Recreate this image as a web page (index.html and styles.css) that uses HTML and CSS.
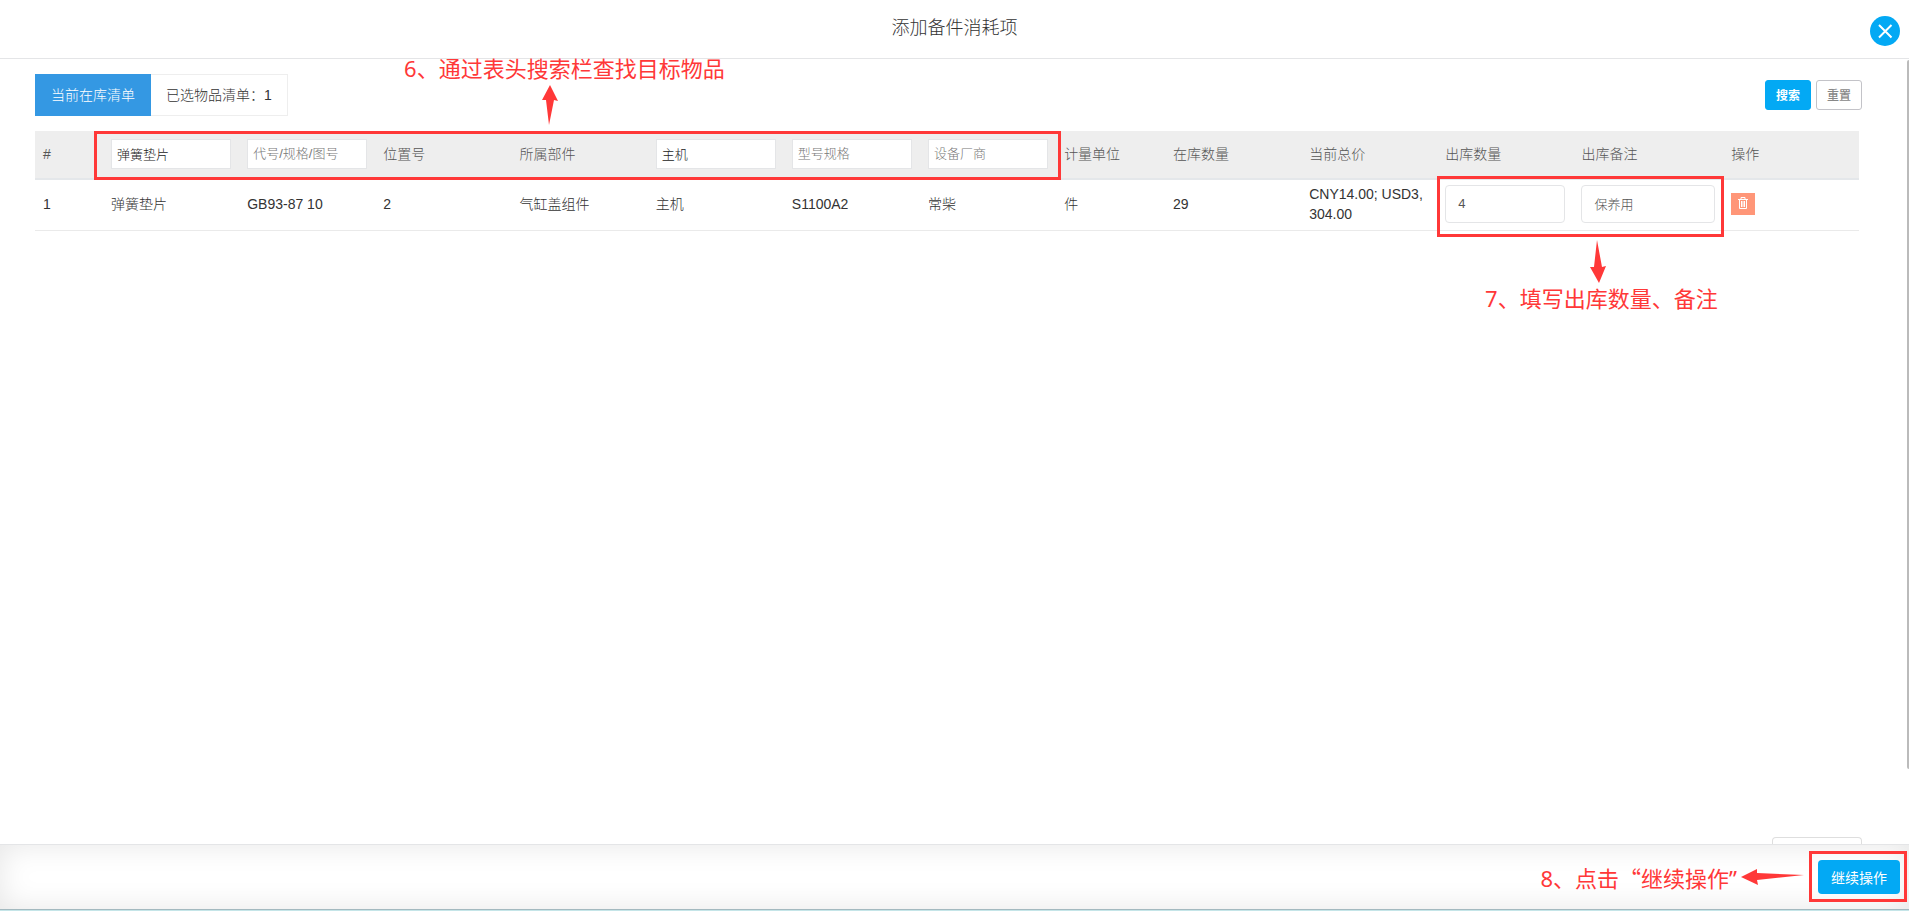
FILE: index.html
```html
<!DOCTYPE html>
<html lang="zh-CN">
<head>
<meta charset="utf-8">
<title>添加备件消耗项</title>
<link rel="stylesheet" href="styles.css">
</head>
<body>
<div class="dialog">
  <header class="dialog-header">
    <h1 class="dialog-title">添加备件消耗项</h1>
    <button class="close" type="button" aria-label="关闭">
      <svg viewBox="0 0 30 30" width="30" height="30"><path d="M9 9 21.500 21.500M21.500 9 9 21.500" stroke="#fff" stroke-width="2" fill="none"/></svg>
    </button>
  </header>

  <main class="dialog-body">
    <div class="toolbar">
      <nav class="tabs">
        <button class="tab tab-active" type="button">当前在库清单</button>
        <button class="tab" type="button">已选物品清单：1</button>
      </nav>
      <div class="actions">
        <button class="btn btn-primary" type="button">搜索</button>
        <button class="btn btn-plain" type="button">重置</button>
      </div>
      <div class="note note-search">
        <span>6、通过表头搜索栏查找目标物品</span>
        <svg viewBox="0 0 18 40" width="18" height="40"><path d="M9 0 17 16 13 15 8 40 5 15 1 15Z" fill="#ff3838"/></svg>
      </div>
    </div>

    <div class="table-wrap">
      <table class="stock">
        <colgroup>
          <col class="c-index"><col class="c-std"><col class="c-std"><col class="c-std"><col class="c-std"><col class="c-std"><col class="c-std"><col class="c-std"><col class="c-unit"><col class="c-std"><col class="c-std"><col class="c-std"><col class="c-remark"><col>
        </colgroup>
        <thead>
          <tr>
            <th>#</th>
            <th><input class="filter" type="text" aria-label="名称" value="弹簧垫片"></th>
            <th><input class="filter" type="text" aria-label="代号/规格/图号" placeholder="代号/规格/图号"></th>
            <th>位置号</th>
            <th>所属部件</th>
            <th><input class="filter" type="text" aria-label="所属设备" value="主机"></th>
            <th><input class="filter" type="text" aria-label="型号规格" placeholder="型号规格"></th>
            <th><input class="filter" type="text" aria-label="设备厂商" placeholder="设备厂商"></th>
            <th>计量单位</th>
            <th>在库数量</th>
            <th>当前总价</th>
            <th>出库数量</th>
            <th>出库备注</th>
            <th>操作</th>
          </tr>
        </thead>
        <tbody>
          <tr>
            <td>1</td>
            <td>弹簧垫片</td>
            <td>GB93-87 10</td>
            <td>2</td>
            <td>气缸盖组件</td>
            <td>主机</td>
            <td>S1100A2</td>
            <td>常柴</td>
            <td>件</td>
            <td>29</td>
            <td class="price">CNY14.00; USD3,304.00</td>
            <td><input class="field" type="text" aria-label="出库数量" value="4"></td>
            <td><input class="field" type="text" aria-label="出库备注" value="保养用"></td>
            <td>
              <button class="delete" type="button" aria-label="删除">
                <svg viewBox="0 0 10 12" width="10" height="12" fill="none" stroke="#fff"><path d="M3 2V.5h4V2M0 2.500h10M1.500 3v8.500h7V3M3.500 4v6M5 4v6M6.500 4v6"/></svg>
              </button>
            </td>
          </tr>
        </tbody>
      </table>
      <div class="mark mark-filters"></div>
      <div class="mark mark-fields"></div>
      <div class="note note-fields">
        <svg viewBox="0 0 18 44" width="18" height="44"><path d="M8 0 13 27 17 26 10 43 1 27 5 27Z" fill="#ff3838"/></svg>
        <span>7、填写出库数量、备注</span>
      </div>
    </div>

    <div class="pager"></div>
    <div class="scroll-thumb"></div>
  </main>

  <footer class="dialog-footer">
    <div class="note-inline">
      <span>8、点击<span class="wide-quote">“</span>继续操作”</span>
      <svg viewBox="0 0 64 18" width="64" height="18"><path d="M0 9 16 1 16 5 63 7 16 12 17 17Z" fill="#ff3838"/></svg>
    </div>
    <div class="submit-mark"><button class="submit" type="button">继续操作</button></div>
  </footer>
</div>
</body>
</html>
```
FILE: styles.css
```css
* {
  box-sizing: border-box;
}

body {
  margin: 0;
  color: #333;
  background: #c5e5e8;
  font: 14px/20px "Liberation Sans", "Noto Sans CJK SC", sans-serif;
}

button,
input {
  font-family: inherit;
  margin: 0;
}

button {
  cursor: pointer;
}

svg {
  display: block;
}

.dialog {
  display: flex;
  flex-direction: column;
  height: calc(100vh - 1px);
  border-bottom: 1px solid #a3b9bf;
  background: #fff;
}

.dialog-header {
  position: relative;
  display: flex;
  justify-content: center;
  padding: 16px 0 18px;
  border-bottom: 1px solid #e4e5e7;
}

.dialog-title {
  margin: 0;
  color: #333;
  font-size: 18px;
  font-weight: 300;
  line-height: 24px;
}

.close {
  position: absolute;
  top: 16px;
  right: 9px;
  padding: 0;
  border: 0;
  border-radius: 50%;
  background: #03a9f4;
}

.dialog-body {
  position: relative;
  flex: 1;
  display: flex;
  flex-direction: column;
  min-height: 0;
  padding: 15px 47px 0 35px;
}

.toolbar {
  position: relative;
  display: flex;
  justify-content: space-between;
  align-items: center;
  margin-bottom: 15px;
}

.tabs {
  display: flex;
}

.tab {
  height: 42px;
  padding: 0 15px 2px;
  border: 1px solid #eee;
  border-left: 0;
  background: #fff;
  color: #333;
  font-size: 14px;
  font-weight: 300;
}

.tab-active {
  padding: 0 16px 2px;
  border: 0;
  background: #3498e3;
  color: #fff;
}

.actions {
  display: flex;
  gap: 5px;
}

.btn {
  width: 46px;
  height: 30px;
  padding: 0 0 2px;
  border: 1px solid #03a9f4;
  border-radius: 3px;
  font-size: 12px;
}

.btn-primary {
  background: #03a9f4;
  color: #fff;
  font-weight: 700;
}

.btn-plain {
  border-color: #c3c3c8;
  background: #fff;
  color: #888;
  font-weight: 500;
}

.table-wrap {
  position: relative;
  margin-right: 3px;
}

.stock {
  width: 100%;
  border-collapse: separate;
  border-spacing: 0;
  table-layout: fixed;
}

.c-index { width: 3.73%; }
.c-std { width: 7.465%; }
.c-unit { width: 5.97%; }
.c-remark { width: 8.21%; }

.stock th,
.stock td {
  text-align: left;
  vertical-align: middle;
  font-weight: 300;
}

.stock th {
  height: 49px;
  padding: 6px 8px 8px;
  border-bottom: 2px solid #e4e7ea;
  background: #eee;
  color: #555;
}

.stock td {
  height: 51px;
  padding: 4px 8px 6px;
  border-bottom: 1px solid #eaeaea;
}

.stock .price {
  word-break: break-all;
}

.filter,
.field {
  display: block;
  width: 100%;
  border: 1px solid #e4e5e7;
  background: #fff;
  font-size: 13px;
  font-weight: 300;
}

.filter {
  height: 30px;
  padding: 0 5px 1px;
  color: #222;
}

.filter::placeholder {
  color: #777;
}

.field {
  height: 38px;
  padding: 0 12px 2px;
  border-radius: 4px;
  color: #555;
}

.delete {
  display: flex;
  align-items: center;
  justify-content: center;
  width: 24px;
  height: 22px;
  padding: 0 0 2px;
  border: 0;
  background: #ff9678;
}

.mark {
  position: absolute;
  border: 3px solid #ff3838;
  pointer-events: none;
}

.mark-filters {
  top: 0;
  left: 3.25%;
  width: 53%;
  height: 49px;
}

.mark-fields {
  top: 45px;
  right: 7.4%;
  width: 15.75%;
  height: 61px;
}

.note,
.note-inline {
  color: #ff3838;
  font-family: "Noto Sans", "Noto Sans CJK SC", sans-serif;
  font-size: 22px;
  line-height: 28px;
  white-space: nowrap;
}

.note {
  position: absolute;
  display: flex;
  flex-direction: column;
}

.note-search {
  top: -20px;
  left: 20.2%;
}

.note-search svg {
  align-self: flex-start;
  margin-top: 3px;
  margin-left: 137px;
}

.note-fields {
  top: 109px;
  left: 79.5%;
}

.note-fields svg {
  margin-left: 104px;
}

.wide-quote {
  font-family: "Noto Sans CJK SC", sans-serif;
}

.pager {
  width: 90px;
  height: 7px;
  margin-top: auto;
  margin-left: auto;
  border: 1px solid #dedede;
  border-bottom: 0;
  border-radius: 4px 4px 0 0;
}

.scroll-thumb {
  position: absolute;
  top: 1px;
  right: 0;
  width: 2px;
  height: 90.3%;
  border-radius: 2px 0 0 2px;
  background: #bbb;
}

.dialog-footer {
  display: flex;
  align-items: flex-start;
  justify-content: flex-end;
  height: 65px;
  padding: 6px 2px 0 0;
  border-top: 1px solid #e4e5e7;
  box-shadow: inset 0 0 30px rgba(0, 0, 0, 0.1);
}

.note-inline {
  display: flex;
  align-items: center;
  gap: 4px;
  height: 52px;
  margin-right: 4px;
}

.submit-mark {
  padding: 6px 4px 5px 6px;
  border: 3px solid #ff3838;
}

.submit {
  display: block;
  height: 34px;
  padding: 0 13px 1px;
  border: 0;
  border-radius: 4px;
  background: #03a9f4;
  color: #fff;
  font-size: 14px;
}
```
